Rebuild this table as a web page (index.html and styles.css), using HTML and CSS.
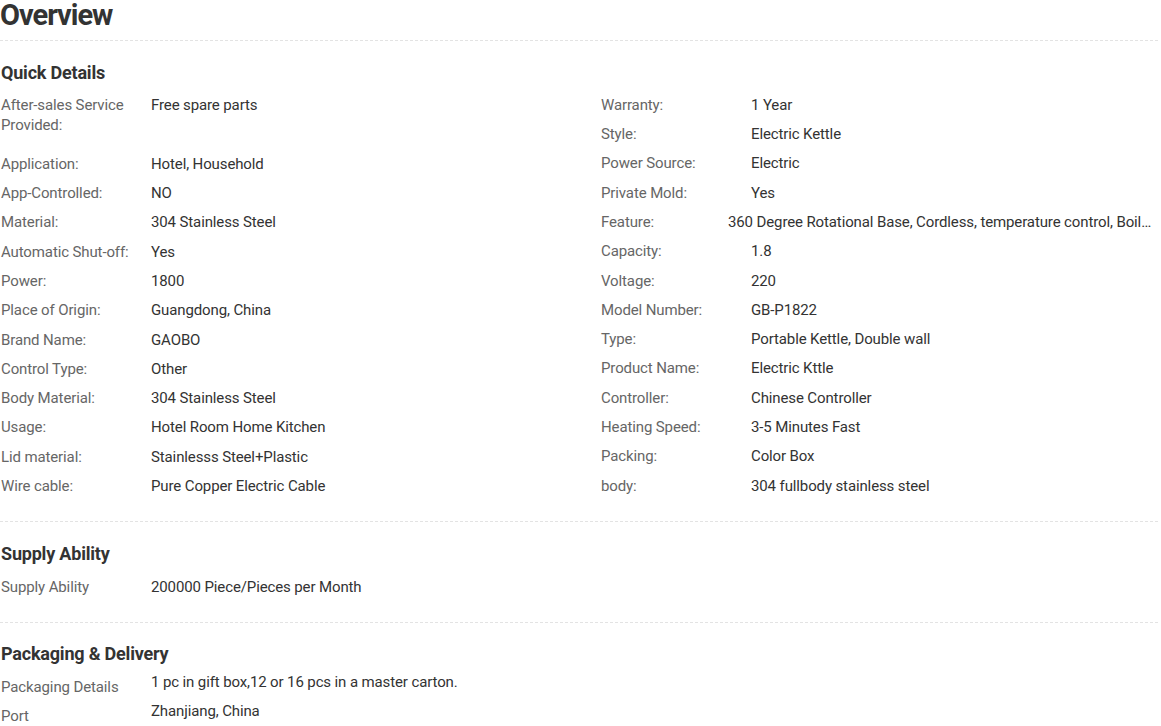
FILE: index.html
```html
<!DOCTYPE html>
<html>
<head>
<meta charset="utf-8">
<link rel="stylesheet" href="styles.css">
</head>
<body>
<div class="page">
  <h1 class="title">Overview</h1>

  <section class="section section--details">
    <h2 class="section-title">Quick Details</h2>
    <div class="columns">
      <div class="col">
        <div class="row row--double"><div class="label">After-sales Service Provided:</div><div class="value">Free spare parts</div></div>
        <div class="row"><div class="label">Application:</div><div class="value">Hotel, Household</div></div>
        <div class="row"><div class="label">App-Controlled:</div><div class="value">NO</div></div>
        <div class="row"><div class="label">Material:</div><div class="value">304 Stainless Steel</div></div>
        <div class="row"><div class="label">Automatic Shut-off:</div><div class="value">Yes</div></div>
        <div class="row"><div class="label">Power:</div><div class="value">1800</div></div>
        <div class="row"><div class="label">Place of Origin:</div><div class="value">Guangdong, China</div></div>
        <div class="row"><div class="label">Brand Name:</div><div class="value">GAOBO</div></div>
        <div class="row"><div class="label">Control Type:</div><div class="value">Other</div></div>
        <div class="row"><div class="label">Body Material:</div><div class="value">304 Stainless Steel</div></div>
        <div class="row"><div class="label">Usage:</div><div class="value">Hotel Room Home Kitchen</div></div>
        <div class="row"><div class="label">Lid material:</div><div class="value">Stainlesss Steel+Plastic</div></div>
        <div class="row"><div class="label">Wire cable:</div><div class="value">Pure Copper Electric Cable</div></div>
      </div>
      <div class="col col--right">
        <div class="row"><div class="label">Warranty:</div><div class="value">1 Year</div></div>
        <div class="row"><div class="label">Style:</div><div class="value">Electric Kettle</div></div>
        <div class="row"><div class="label">Power Source:</div><div class="value">Electric</div></div>
        <div class="row"><div class="label">Private Mold:</div><div class="value">Yes</div></div>
        <div class="row row--long"><div class="label">Feature:</div><div class="value">360 Degree Rotational Base, Cordless, temperature control, Boil-dry Protection, Overheat Protection</div></div>
        <div class="row"><div class="label">Capacity:</div><div class="value">1.8</div></div>
        <div class="row"><div class="label">Voltage:</div><div class="value">220</div></div>
        <div class="row"><div class="label">Model Number:</div><div class="value">GB-P1822</div></div>
        <div class="row"><div class="label">Type:</div><div class="value">Portable Kettle, Double wall</div></div>
        <div class="row"><div class="label">Product Name:</div><div class="value">Electric Kttle</div></div>
        <div class="row"><div class="label">Controller:</div><div class="value">Chinese Controller</div></div>
        <div class="row"><div class="label">Heating Speed:</div><div class="value">3-5 Minutes Fast</div></div>
        <div class="row"><div class="label">Packing:</div><div class="value">Color Box</div></div>
        <div class="row"><div class="label">body:</div><div class="value">304 fullbody stainless steel</div></div>
      </div>
    </div>
  </section>

  <section class="section section--supply">
    <h2 class="section-title">Supply Ability</h2>
    <div class="row"><div class="label">Supply Ability</div><div class="value">200000 Piece/Pieces per Month</div></div>
  </section>

  <section class="section section--last">
    <h2 class="section-title section-title--tight">Packaging &amp; Delivery</h2>
    <div class="row row--pkg"><div class="label">Packaging Details</div><div class="value">1 pc in gift box,12 or 16 pcs in a master carton.</div></div>
    <div class="row row--pkg"><div class="label">Port</div><div class="value">Zhanjiang, China</div></div>
  </section>
</div>
</body>
</html>
```

FILE: styles.css
```css
html, body {
  margin: 0;
  padding: 0;
  background: #fff;
}

body {
  font-family: Roboto, "Liberation Sans", Arial, sans-serif;
  color: #333;
}

.page {
  width: 1158px;
}

.title {
  margin: 0;
  font-size: 29px;
  line-height: 30px;
  letter-spacing: -1px;
  font-weight: 700;
  color: #333;
  padding-bottom: 10px;
  border-bottom: 1px dashed #e3e3e3;
}

.section {
  padding: 20px 0 20.5px;
  border-bottom: 1px dashed #e3e3e3;
}

.section--supply {
  padding-bottom: 20px;
}

.section--last {
  border-bottom: none;
  padding: 19px 0 0;
}

.section-title {
  margin: 0 0 6px;
  padding-left: 1px;
  font-size: 18px;
  line-height: 24px;
  letter-spacing: -0.2px;
  font-weight: 700;
  color: #333;
}

.section--details .section-title {
  margin-bottom: 5px;
}

.section-title--tight {
  margin-bottom: 6.5px;
}

.columns {
  display: grid;
  grid-template-columns: 600px minmax(0, 1fr);
}

.col {
  min-width: 0;
}

.col--right {
  padding-right: 5px;
}

.row {
  display: flex;
  padding: 4.67px 0 4.67px 1px;
  font-size: 15px;
  line-height: 20px;
  letter-spacing: -0.12px;
}

.row--double {
  padding-bottom: 14.33px;
}

.label {
  flex: 0 0 150px;
  width: 150px;
  color: #666;
}

.value {
  flex: 1 1 auto;
  min-width: 0;
  color: #333;
}

.row--long .label {
  flex-basis: 127px;
  width: 127px;
}

.row--long .value {
  white-space: nowrap;
  overflow: hidden;
  text-overflow: ellipsis;
}

.row--pkg {
  padding-top: 0;
  padding-bottom: 4.33px;
}

.row--pkg .label {
  padding-top: 5px;
}
```
